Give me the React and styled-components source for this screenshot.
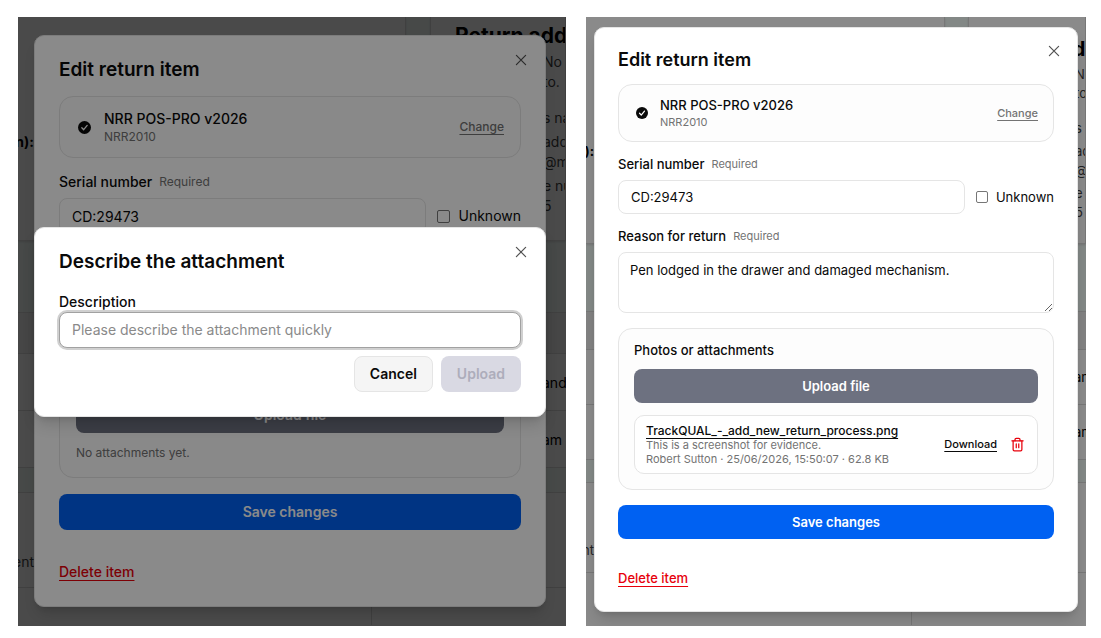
import React from 'react';
import styled, { createGlobalStyle, css, ThemeProvider } from 'styled-components';
import { Trash2 } from 'lucide-react';

const GlobalStyle = createGlobalStyle`
  *, *::before, *::after { box-sizing: border-box; }
  body {
    margin: 0;
    background: #fff;
    color: #0a0a0a;
    font-family: Inter, "Liberation Sans", sans-serif;
  }
  button, input, textarea { font: inherit; color: inherit; margin: 0; }
  h2, h3, p { margin: 0; }
`;

const regular = {
  title: 19, titleLine: 20, text: 14, small: 12, line: 20, smallLine: 16,
  gap: 16, pad: 24, boxPad: 12, control: 36, area: 64, labelLine: 16, sectionLine: 14,
  sectionGap: 12, indent: 18, check: 13, tick: 13, tickGap: 13, footer: 16,
  frame: '18px 20px 18px 16px', closeTop: 16, closeSide: 16,
  page: {
    top: 224, left: 388, gap: 24, band: 72, head: 41, rowA: 57, rowB: 57, strip: 25, note: 95,
    bottom: 354, heading: 21, headTop: 7, headSide: 24, text: 14,
    side: 524, lines: 20, label: 115, noteTop: 59, edge: 16,
  },
};

const compact = {
  title: 18, titleLine: 18, text: 13, small: 11, line: 19, smallLine: 15,
  gap: 15, pad: 23, boxPad: 11, control: 34, area: 61, labelLine: 15, sectionLine: 13,
  sectionGap: 12, indent: 17, check: 12, tick: 12, tickGap: 12, footer: 15,
  frame: '10px 8px 14px 8px', closeTop: 15, closeSide: 15,
  page: {
    top: 227, left: 359, gap: 23, band: 68, head: 38, rowA: 55, rowB: 55, strip: 23, note: 90,
    bottom: 326, heading: 20, headTop: 20, headSide: 22, text: 13,
    side: 488, lines: 19, label: 124, noteTop: 57, edge: 8,
  },
};

const Board = styled.main`
  display: grid;
  grid-template-columns: 548fr 500fr;
  gap: 20px;
  padding: 17px 15px 13px 18px;
`;

const Scene = styled.section`
  display: grid;
  grid-template: minmax(0, 1fr) / minmax(0, 1fr);
  overflow: hidden;
  & > * { grid-area: 1 / 1; }
`;

const Shade = styled.div`
  position: relative;
  background: rgba(0, 0, 0, 0.46);
`;

/* Page behind the dialogs */
const Backdrop = styled.div`
  display: flex;
  flex-direction: column;
  height: 608px;
  overflow: hidden;
  background: #f3fbf8;
  color: #000;
  font-size: ${({ theme }) => theme.page.text}px;
  white-space: nowrap;
`;

const TopCards = styled.div`
  display: grid;
  flex: none;
  grid-template-columns: ${({ theme }) => theme.page.left}px minmax(0, 1fr);
  gap: ${({ theme }) => theme.page.gap}px;
  height: ${({ theme }) => theme.page.top}px;
`;

const PageCard = styled.div`
  background: #fff;
  border: solid #dcdcdc;
  border-width: 0 1px 1px 0;
  box-shadow: 0 1px 2px rgba(0, 0, 0, 0.12);
  overflow: hidden;
  & + & { border-left-width: 1px; }
`;

const edgeText = css`
  display: flex;
  justify-content: flex-end;
  width: ${({ theme }) => theme.page.edge}px;
  line-height: 20px;
`;

const EdgeLabel = styled.p`
  ${edgeText}
  margin-top: ${({ theme }) => theme.page.label}px;
  font-weight: 700;
`;

const EdgeNote = styled.p`
  ${edgeText}
  color: #444;
`;

const PageHeading = styled.h3`
  padding: ${({ theme }) => `${theme.page.headTop}px 0 0 ${theme.page.headSide}px`};
  font-size: ${({ theme }) => theme.page.heading}px;
  line-height: 24px;
  font-weight: 700;
`;

const AddressLines = styled.div`
  display: flex;
  flex-direction: column;
  align-items: flex-start;
  padding-left: ${({ theme }) => theme.page.side - theme.page.left - theme.page.gap}px;
  padding-top: 4px;
  line-height: ${({ theme }) => theme.page.lines}px;
  color: #3f3f3f;
`;

const AddressGroup = styled.p`
  margin-bottom: ${({ $space }) => $space}px;
`;

const Band = styled.div`
  flex: none;
  height: ${({ $height }) => $height}px;
  padding-left: ${({ theme }) => theme.page.side}px;
  border-bottom: 1px solid #dcdcdc;
  background: ${({ $tone }) => $tone || 'transparent'};
  line-height: ${({ $height }) => $height}px;
`;

const NoteArea = styled.div`
  flex: none;
  height: ${({ theme }) => theme.page.note}px;
  padding-top: ${({ theme }) => theme.page.noteTop}px;
  background: #fff;
  border-bottom: 1px solid #dcdcdc;
`;

const PageFoot = styled.div`
  flex: 1;
  display: grid;
  grid-template-columns: ${({ theme }) => theme.page.bottom}px 1fr;
  background: #fff;
  & > :first-child { border-right: 1px solid #dcdcdc; }
`;

function PageBehind({ edge, note, theme }) {
  const p = theme.page;
  return (
    <Backdrop aria-hidden="true">
      <TopCards>
        <PageCard><EdgeLabel>{edge}</EdgeLabel></PageCard>
        <PageCard>
          <PageHeading>Return add</PageHeading>
          <AddressLines>
            <AddressGroup $space={16}>No R<br />to.</AddressGroup>
            <AddressGroup $space={4}>s na</AddressGroup>
            <AddressGroup $space={4}>add<br />@m</AddressGroup>
            <AddressGroup $space={0}>e nu<br />5</AddressGroup>
          </AddressLines>
        </PageCard>
      </TopCards>
      <Band $height={p.band} />
      <Band $height={p.head} $tone="#f1f1f1" />
      <Band $height={p.rowA} $tone="#fff">and</Band>
      <Band $height={p.rowB} $tone="#fff">am</Band>
      <Band $height={p.strip} />
      <NoteArea><EdgeNote>{note}</EdgeNote></NoteArea>
      <PageFoot><div /><div /></PageFoot>
    </Backdrop>
  );
}

/* Dialogs */
const Dialog = styled.div`
  position: relative;
  align-self: ${({ $centered }) => ($centered ? 'center' : 'start')};
  display: flex;
  flex-direction: column;
  gap: ${({ $centered, theme }) => ($centered ? 20 : theme.gap)}px;
  margin: ${({ theme }) => theme.frame};
  padding: ${({ theme }) => theme.pad}px;
  background: #fff;
  border: 1px solid #e5e5e5;
  border-radius: 10px;
  box-shadow: 0 10px 15px -3px rgba(0, 0, 0, 0.15), 0 4px 6px -4px rgba(0, 0, 0, 0.15);
  font-size: ${({ theme }) => theme.text}px;
  line-height: ${({ theme }) => theme.line}px;
`;

const Title = styled.h2`
  font-size: ${({ theme }) => theme.title}px;
  line-height: ${({ theme }) => theme.titleLine}px;
  font-weight: 600;
`;

const CloseButton = styled.button`
  position: absolute;
  top: ${({ theme }) => theme.closeTop}px;
  right: ${({ theme }) => theme.closeSide}px;
  display: flex;
  padding: 0;
  border: 0;
  background: none;
  color: #525252;
`;

const outlined = css`
  border: 1px solid #e5e5e5;
  border-radius: 14px;
`;

const ItemBox = styled.div`
  ${outlined}
  display: flex;
  align-items: center;
  gap: ${({ theme }) => theme.tickGap}px;
  padding: ${({ theme }) => `${theme.boxPad}px ${theme.gap}px ${theme.boxPad}px ${theme.indent}px`};
  background: #fdfdfd;
`;

const Tick = styled.svg`
  flex: none;
  width: ${({ theme }) => theme.tick}px;
  height: ${({ theme }) => theme.tick}px;
`;

const Grow = styled.div`
  flex: 1;
  min-width: 0;
`;

const ItemName = styled.p`
  font-weight: 500;
`;

const Muted = styled.p`
  color: #737373;
  font-size: ${({ theme }) => theme.small}px;
  line-height: ${({ theme }) => theme.smallLine}px;
`;

const TextLink = styled.a`
  color: #0a0a0a;
  font-weight: 500;
  text-decoration: underline;
  text-underline-offset: 3px;
`;

const SmallLink = styled(TextLink)`
  font-size: ${({ theme }) => theme.small}px;
`;

const ChangeLink = styled(SmallLink)`
  color: #737373;
`;

const DeleteLink = styled(TextLink)`
  align-self: flex-start;
  margin-top: ${({ theme }) => theme.footer}px;
  color: #e7000b;
`;

const Field = styled.div`
  display: flex;
  flex-direction: column;
  gap: ${({ $gap }) => $gap ?? 8}px;
`;

const LabelRow = styled.div`
  display: flex;
  align-items: center;
  gap: 7px;
  line-height: ${({ theme }) => theme.labelLine}px;
`;

const Label = styled.label`
  font-weight: 500;
`;

const ControlRow = styled.div`
  display: flex;
  align-items: center;
  gap: 11px;
`;

const control = css`
  display: block;
  width: 100%;
  border: 1px solid #e5e5e5;
  border-radius: 8px;
  background: #fff;
  padding: 7px 12px;
  outline: none;
`;

const TextInput = styled.input`
  ${control}
  flex: 1;
  min-width: 0;
  flex-basis: ${({ theme }) => theme.control}px;
  height: ${({ theme }) => theme.control}px;
  ${({ $active }) => $active && css`
    border-color: #a1a1a1;
    box-shadow: 0 0 0 2px #d0d0d0;
  `}
  &::placeholder { color: #8a8a8a; opacity: 1; }
`;

const TextArea = styled.textarea`
  ${control}
  padding: 8px 11px;
  height: ${({ theme }) => theme.area}px;
  resize: vertical;
`;

const CheckLabel = styled.label`
  display: flex;
  align-items: center;
  gap: 8px;
  white-space: nowrap;
`;

const Checkbox = styled.input`
  appearance: none;
  width: ${({ theme }) => theme.check}px;
  height: ${({ theme }) => theme.check}px;
  border: 1px solid #767676;
  border-radius: 2px;
  background: #fff;
`;

const Section = styled.section`
  ${outlined}
  display: flex;
  flex-direction: column;
  gap: ${({ theme }) => theme.sectionGap}px;
  padding: ${({ theme }) => theme.gap}px;
  background: #fdfdfd;
`;

const SectionTitle = styled.h3`
  font-size: ${({ theme }) => theme.text}px;
  line-height: ${({ theme }) => theme.sectionLine}px;
  font-weight: 500;
`;

const tones = {
  primary: css`background: #0061f2; color: #fff;`,
  slate: css`background: #6d7180; color: #fff;`,
  plain: css`background: #f5f5f5; color: #0a0a0a; border-color: #e5e5e5;`,
  disabled: css`background: #d9d9e3; color: #adadbb;`,
};

const Button = styled.button`
  height: ${({ theme }) => theme.control}px;
  padding: 0 15px;
  border: 1px solid transparent;
  border-radius: 8px;
  font-weight: 600;
  ${({ $tone }) => tones[$tone]}
`;

const Actions = styled.div`
  display: flex;
  justify-content: flex-end;
  gap: 8px;
`;

const Attachment = styled.div`
  display: flex;
  align-items: center;
  gap: 13px;
  padding: 7px 12px 7px 11px;
  border: 1px solid #e5e5e5;
  border-radius: 10px;
  background: #fff;
`;

const FileName = styled.p`
  font-size: 12px;
  line-height: 15px;
  ${TextLink} { font-weight: 450; }
`;

const FileInfo = styled.p`
  color: #737373;
  font-size: 11px;
  line-height: 14px;
`;

const IconButton = styled.button`
  display: flex;
  padding: 0;
  border: 0;
  background: none;
  color: #e7000b;
`;

function Close() {
  return (
    <CloseButton type="button" aria-label="Close">
      <svg width="16" height="16" viewBox="0 0 16 16" fill="none" stroke="currentColor" strokeWidth="1.2">
        <path d="M3.4 3.4l9.2 9.2M12.6 3.4L3.4 12.6" strokeLinecap="round" />
      </svg>
    </CloseButton>
  );
}

function EditItemDialog({ id, reason, children }) {
  return (
    <Dialog role="dialog" aria-labelledby={`${id}-title`}>
      <Title id={`${id}-title`}>Edit return item</Title>
      <Close />
      <ItemBox>
        <Tick viewBox="0 0 16 16">
          <circle cx="8" cy="8" r="8" fill="#0a0a0a" />
          <path d="M4.7 8.3l2.3 2.4 4.3-5.3" fill="none" stroke="#fff" strokeWidth="1.6" strokeLinecap="round" strokeLinejoin="round" />
        </Tick>
        <Grow>
          <ItemName>NRR POS-PRO v2026</ItemName>
          <Muted>NRR2010</Muted>
        </Grow>
        <ChangeLink href="#change">Change</ChangeLink>
      </ItemBox>
      <Field>
        <LabelRow>
          <Label htmlFor={`${id}-serial`}>Serial number</Label>
          <Muted>Required</Muted>
        </LabelRow>
        <ControlRow>
          <TextInput id={`${id}-serial`} defaultValue="CD:29473" />
          <CheckLabel><Checkbox type="checkbox" />Unknown</CheckLabel>
        </ControlRow>
      </Field>
      <Field>
        <LabelRow>
          {reason && <Label htmlFor={`${id}-reason`}>Reason for return</Label>}
          {reason ? <Muted>Required</Muted> : <Muted>&nbsp;</Muted>}
        </LabelRow>
        <TextArea id={`${id}-reason`} aria-label="Reason for return" defaultValue={reason} />
      </Field>
      <Section>
        <SectionTitle>{reason ? 'Photos or attachments' : '\u00a0'}</SectionTitle>
        <Button type="button" $tone="slate">Upload file</Button>
        {children}
      </Section>
      <Button type="button" $tone="primary">Save changes</Button>
      <DeleteLink href="#delete">Delete item</DeleteLink>
    </Dialog>
  );
}

function DescribeDialog() {
  return (
    <Dialog role="dialog" aria-labelledby="describe-title" $centered>
      <Title id="describe-title">Describe the attachment</Title>
      <Close />
      <Field>
        <Field $gap={0}>
          <Label htmlFor="description">Description</Label>
          <TextInput id="description" placeholder="Please describe the attachment quickly" $active />
        </Field>
        <Actions>
          <Button type="button" $tone="plain">Cancel</Button>
          <Button type="button" $tone="disabled" disabled>Upload</Button>
        </Actions>
      </Field>
    </Dialog>
  );
}

export default function App() {
  return (
    <>
      <GlobalStyle />
      <Board>
        <ThemeProvider theme={regular}>
          <Scene>
            <PageBehind edge="n):" note="ent" theme={regular} />
            <Shade />
            <EditItemDialog id="first">
              <Muted>No attachments yet.</Muted>
            </EditItemDialog>
            <Shade />
            <DescribeDialog />
          </Scene>
        </ThemeProvider>
        <ThemeProvider theme={compact}>
          <Scene>
            <PageBehind edge="):" note="nt" theme={compact} />
            <Shade />
            <EditItemDialog id="second" reason="Pen lodged in the drawer and damaged mechanism.">
              <Attachment>
                <Grow>
                  <FileName><TextLink href="#file">TrackQUAL_-_add_new_return_process.png</TextLink></FileName>
                  <FileInfo>This is a screenshot for evidence.</FileInfo>
                  <FileInfo>Robert Sutton · 25/06/2026, 15:50:07 · 62.8 KB</FileInfo>
                </Grow>
                <SmallLink href="#download">Download</SmallLink>
                <IconButton type="button" aria-label="Delete attachment"><Trash2 size={15} strokeWidth={2} /></IconButton>
              </Attachment>
            </EditItemDialog>
          </Scene>
        </ThemeProvider>
      </Board>
    </>
  );
}
